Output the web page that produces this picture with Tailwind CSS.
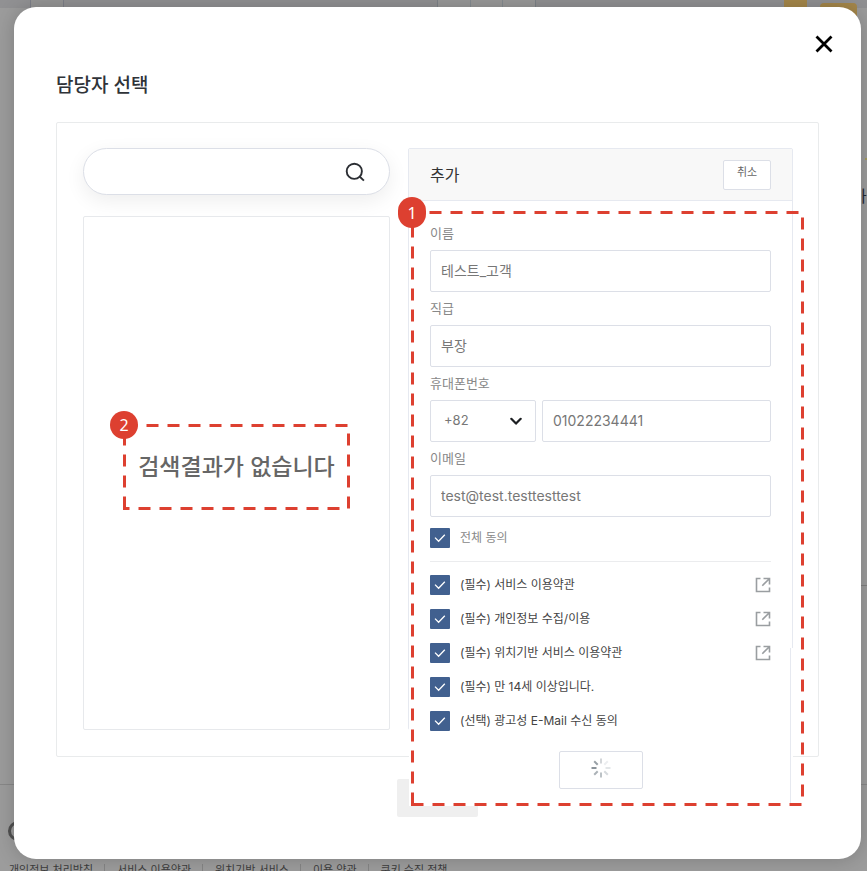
<!DOCTYPE html>
<html lang="ko">
<head>
<meta charset="utf-8">
<meta name="viewport" content="width=device-width, initial-scale=1">
<title>담당자 선택</title>
<script src="https://cdn.jsdelivr.net/npm/@tailwindcss/browser@4"></script>
</head>
<body class="relative min-h-screen overflow-hidden bg-[#9c9c9c] font-['Inter','Noto_Sans_CJK_KR',sans-serif]">

<svg width="0" height="0" class="absolute" aria-hidden="true">
  <symbol id="check" viewBox="0 0 20 20"><path d="M5 9.6 8.6 13.2 14.8 6.8" fill="none" stroke="#fff" stroke-width="1.3"/></symbol>
  <symbol id="external" viewBox="0 0 16 16"><path d="M5.500 1.500H1.500V14.500H14.500V10.500M7.300 8.700 13.800 2.200M8.500 1.500H14.500V7.500" fill="none" stroke="#9a9ea1" stroke-width="1.6"/></symbol>
</svg>

<!-- Dimmed page behind the dialog -->
<div class="absolute inset-0" aria-hidden="true">
  <div class="absolute inset-x-0 top-0 h-2 bg-[#919193]"></div>
  <div class="absolute left-[30px] top-0 h-2 w-[34px] border-x border-[#7d7f88] bg-[#959595]"></div>
  <div class="absolute left-[437px] top-0 h-2 w-[99px] border-x border-[#7d8388] bg-[#999]"></div>
  <div class="absolute left-[470px] top-0 h-2 w-[33px] border-x border-[#858b90]"></div>
  <div class="absolute left-[784px] top-0 h-2 w-[23px] bg-[#a5874a]"></div>
  <div class="absolute left-[820px] top-[3px] h-6 w-[37px] rounded-sm bg-[#a5874a]"></div>
  <div class="absolute left-[865px] top-[158px] h-[2px] w-2 bg-[#a39a5c]"></div>
  <div class="absolute left-[852px] top-[184px] text-base text-[#232733]">가</div>
  <div class="absolute left-[800px] right-0 top-[585px] h-px bg-[#808080]"></div>
  <div class="absolute inset-x-0 top-[784px] h-px bg-[#888]"></div>
  <div class="absolute left-[8px] top-[821px] h-5 w-5 rounded-full border-3 border-[#505050]"></div>
  <div class="absolute left-[9px] top-[862px] flex items-center whitespace-nowrap text-[11px] leading-4 text-[#3c3c3c]">
    <span>개인정보 처리방침</span><i class="mr-3 ml-[11px] h-3 w-px bg-[#858585]"></i>
    <span>서비스 이용약관</span><i class="mr-3 ml-[11px] h-3 w-px bg-[#858585]"></i>
    <span>위치기반 서비스</span><i class="mr-3 ml-[11px] h-3 w-px bg-[#858585]"></i>
    <span>이용 약관</span><i class="mr-3 ml-[11px] h-3 w-px bg-[#858585]"></i>
    <span>쿠키 수집 정책</span>
  </div>
</div>

<main role="dialog" aria-labelledby="title" class="relative mt-[7px] mr-[6px] ml-[14px] rounded-[22px] bg-white px-[42px] pt-[64px] pb-[42px] shadow-[0_0_20px_rgba(0,0,0,0.2)]">
  <button type="button" aria-label="닫기" class="absolute right-[26px] top-[26px] p-[2px]">
    <svg width="18" height="18" viewBox="0 0 18 18"><path d="M1.5 1.5 16.5 16.5M16.5 1.5 1.5 16.5" stroke="#000" stroke-width="2.8"/></svg>
  </button>
  <h1 id="title" class="mb-[21px] text-[19px] leading-[30px] font-medium text-[#2f3338]">담당자 선택</h1>

  <div class="grid grid-cols-[307fr_385fr] gap-[18px] rounded-[2px] border border-[#e9ebec] pt-[25px] pr-[25px] pb-[26px] pl-[26px]">
    <section class="flex min-w-0 flex-col gap-[21px]">
      <form role="search" class="flex h-[47px] items-center rounded-full border border-[#dcdfe7] bg-white pr-[22px] pl-5 shadow-[0_6px_20px_rgba(0,0,0,0.07)]">
        <input type="search" aria-label="담당자 검색" class="h-full min-w-0 flex-1 outline-none">
        <button type="submit" aria-label="검색" class="p-[2px]">
          <svg width="20" height="20" viewBox="0 0 20 20" fill="none" stroke="#2b2e33" stroke-width="1.9"><circle cx="9.3" cy="9.3" r="7.6"/><path d="M14.8 14.8 18.9 18.6"/></svg>
        </button>
      </form>
      <div class="flex h-[514px] items-center justify-center rounded-[2px] border border-[#e7e9ec] pb-[12px]">
        <div class="relative flex h-[86px] w-[227px] items-center justify-center">
          <p class="whitespace-nowrap text-[23px] leading-8 font-medium text-[#666]">검색결과가 없습니다</p>
          <svg class="absolute inset-0" width="227" height="86" viewBox="0 0 227 86" aria-hidden="true"><path d="M1.500 84.500V1.500H225.500V84.500Z" fill="none" stroke="#dd4030" stroke-width="3" stroke-dasharray="12 9"/></svg>
          <span class="absolute -left-[13px] -top-[13px] flex size-7 items-center justify-center rounded-full bg-[#dd4030] font-['Noto_Sans'] text-base text-white">2</span>
        </div>
      </div>
    </section>

    <section class="relative flex min-w-0 flex-col rounded-[2px] border border-[#e6e9f0]">
      <header class="flex h-[52px] items-center justify-between border-b border-[#e6e9f0] bg-[#f8f8f8] px-[21px]">
        <h2 class="text-base text-[#333]">추가</h2>
        <button type="button" class="h-[30px] w-[48px] rounded-[2px] border border-[#dcdfe7] bg-white pb-1 text-[11px] text-[#666]">취소</button>
      </header>

      <form class="relative z-10 -mb-[77px] flex h-[605px] flex-col bg-white px-[21px] pt-4 text-[14px] text-[#777]">
        <div class="absolute -right-px bottom-0 h-[158px] w-[3px] border-l border-[#e6e9f0] bg-white"></div>

        <label for="name" class="text-[13px] leading-[33px] text-[#888]">이름</label>
        <input id="name" type="text" value="테스트_고객" class="h-[42px] w-full rounded-[2px] border border-[#dcdfe7] px-[10px] pb-[2px] outline-none">
        <label for="rank" class="text-[13px] leading-[33px] text-[#888]">직급</label>
        <input id="rank" type="text" value="부장" class="h-[42px] w-full rounded-[2px] border border-[#dcdfe7] px-[10px] pb-[2px] outline-none">
        <label for="phone" class="text-[13px] leading-[33px] text-[#888]">휴대폰번호</label>
        <div class="flex gap-[6px]">
          <div class="relative">
            <select aria-label="국가번호" class="h-[42px] w-[106px] appearance-none rounded-[2px] border border-[#dcdfe7] pl-[13px] text-[13px] outline-none"><option>+82</option></select>
            <svg class="pointer-events-none absolute right-[14px] top-[17px]" width="12" height="9" viewBox="0 0 12 9"><path d="M1.300 1.800 6 6.600 10.700 1.800" fill="none" stroke="#1c1f22" stroke-width="2.200" stroke-linecap="round" stroke-linejoin="round"/></svg>
          </div>
          <input id="phone" type="tel" value="01022234441" class="h-[42px] min-w-0 flex-1 rounded-[2px] border border-[#dcdfe7] px-[10px] pb-[2px] outline-none">
        </div>
        <label for="email" class="text-[13px] leading-[33px] text-[#888]">이메일</label>
        <input id="email" type="email" value="test@test.testtesttest" class="h-[42px] w-full rounded-[2px] border border-[#dcdfe7] px-[10px] pb-[2px] outline-none">

        <label class="mt-[11px] flex items-center gap-[10px] text-[12px] leading-5 text-[#888]">
          <span class="grid size-5"><input type="checkbox" checked class="col-start-1 row-start-1 size-5 appearance-none rounded-[1px] bg-[#41608f]"><svg class="pointer-events-none col-start-1 row-start-1 size-5"><use href="#check"/></svg></span>전체 동의</label>

        <ul class="mt-[13px] flex flex-col gap-[14px] border-t border-[#ebecee] pt-[13px] text-[12px] leading-5 text-[#444]">
          <li class="flex items-center justify-between">
            <label class="flex items-center gap-[10px]"><span class="grid size-5"><input type="checkbox" checked class="col-start-1 row-start-1 size-5 appearance-none rounded-[1px] bg-[#41608f]"><svg class="pointer-events-none col-start-1 row-start-1 size-5"><use href="#check"/></svg></span>(필수) 서비스 이용약관</label>
            <a href="#" aria-label="서비스 이용약관 보기"><svg class="size-4"><use href="#external"/></svg></a>
          </li>
          <li class="flex items-center justify-between">
            <label class="flex items-center gap-[10px]"><span class="grid size-5"><input type="checkbox" checked class="col-start-1 row-start-1 size-5 appearance-none rounded-[1px] bg-[#41608f]"><svg class="pointer-events-none col-start-1 row-start-1 size-5"><use href="#check"/></svg></span>(필수) 개인정보 수집/이용</label>
            <a href="#" aria-label="개인정보 수집/이용 보기"><svg class="size-4"><use href="#external"/></svg></a>
          </li>
          <li class="flex items-center justify-between">
            <label class="flex items-center gap-[10px]"><span class="grid size-5"><input type="checkbox" checked class="col-start-1 row-start-1 size-5 appearance-none rounded-[1px] bg-[#41608f]"><svg class="pointer-events-none col-start-1 row-start-1 size-5"><use href="#check"/></svg></span>(필수) 위치기반 서비스 이용약관</label>
            <a href="#" aria-label="위치기반 서비스 이용약관 보기"><svg class="size-4"><use href="#external"/></svg></a>
          </li>
          <li>
            <label class="flex items-center gap-[10px]"><span class="grid size-5"><input type="checkbox" checked class="col-start-1 row-start-1 size-5 appearance-none rounded-[1px] bg-[#41608f]"><svg class="pointer-events-none col-start-1 row-start-1 size-5"><use href="#check"/></svg></span>(필수) 만 14세 이상입니다.</label>
          </li>
          <li>
            <label class="flex items-center gap-[10px]"><span class="grid size-5"><input type="checkbox" checked class="col-start-1 row-start-1 size-5 appearance-none rounded-[1px] bg-[#41608f]"><svg class="pointer-events-none col-start-1 row-start-1 size-5"><use href="#check"/></svg></span>(선택) 광고성 E-Mail 수신 동의</label>
          </li>
        </ul>

        <button type="button" aria-label="처리 중" class="mt-5 flex h-[38px] w-[84px] items-center justify-center self-center rounded-[2px] border border-[#dcdfe7] bg-white pb-1">
          <svg width="20" height="20" viewBox="-10 -10 20 20" fill="none" stroke-width="2">
            <path d="M-4.500 0H-9.500" stroke="#8c949b"/>
            <path d="M-3.300-3.300-6.800-6.800" stroke="#98a0a6"/>
            <path d="M0-4.500V-9.500" stroke="#d3d6d9"/>
            <path d="M3.300-3.300 6.800-6.800" stroke="#eceef0"/>
            <path d="M4.500 0H9.500" stroke="#e3e6e8"/>
            <path d="M3.300 3.300 6.800 6.800" stroke="#d6dadd"/>
            <path d="M0 4.500V9.500" stroke="#bcc2c6"/>
            <path d="M-3.300 3.300-6.800 6.800" stroke="#abb2b7"/>
          </svg>
        </button>
      </form>

      <div class="pointer-events-none absolute left-[2px] top-[62px] z-20">
        <svg class="block max-w-none" width="393" height="595" viewBox="0 0 393 595" aria-hidden="true"><path d="M1.500 593.500V1.500H391.500V593.500Z" fill="none" stroke="#dd4030" stroke-width="3" stroke-dasharray="12 9"/></svg>
        <span class="absolute -left-[13px] -top-[14px] flex h-[31px] w-7 items-center justify-center rounded-full bg-[#dd4030] font-['Noto_Sans'] text-base text-white">1</span>
      </div>
    </section>
  </div>

  <button type="button" disabled aria-label="선택" class="mx-auto mt-[22px] block h-[38px] w-[81px] rounded-[2px] bg-[#efefef]"></button>
</main>
</body>
</html>
